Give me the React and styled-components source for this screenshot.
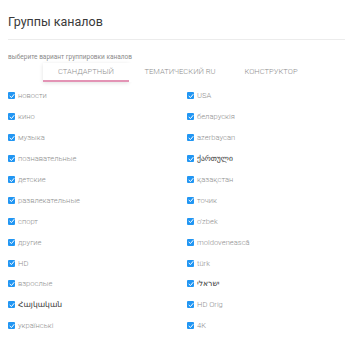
import React, { useState } from "react";
import styled, { createGlobalStyle } from "styled-components";

const GlobalStyle = createGlobalStyle`
  body {
    margin: 0;
    background: #ffffff;
    font-family: Roboto, "Noto Sans", "DejaVu Sans", sans-serif;
  }
`;

const Page = styled.div`
  width: 350px;
  height: 350px;
  overflow: hidden;
  padding: 13px 5px 0 8px;
  box-sizing: border-box;
`;

const Title = styled.h2`
  margin: 0;
  font-size: 12.5px;
  font-weight: 400;
  color: #3a3a3a;
  line-height: 18px;
`;

const Divider = styled.hr`
  border: 0;
  height: 1px;
  background: #ececec;
  margin: 8px 0 12px;
`;

const Hint = styled.div`
  font-size: 6.5px;
  color: #8a8a8a;
  line-height: 10px;
`;

const Tabs = styled.div`
  display: flex;
  padding-left: 35px;
  margin-top: 1px;
`;

const Tab = styled.button`
  border: 0;
  background: #fff;
  font-family: inherit;
  font-size: 7.6px;
  font-weight: 300;
  color: #8f8f8f;
  height: 19px;
  padding: 0;
  width: ${(p) => p.$w}px;
  text-align: center;
  box-shadow: ${(p) =>
    p.$active ? "0 1px 4px rgba(0,0,0,0.12)" : "none"};
  border-bottom: 2px solid ${(p) => (p.$active ? "#e394b5" : "transparent")};
  cursor: pointer;
`;

const Grid = styled.div`
  display: grid;
  grid-template-columns: 179px 1fr;
  grid-auto-rows: 20.9px;
  margin-top: 3.5px;
`;

const Item = styled.label`
  display: flex;
  align-items: center;
  gap: 3px;
  font-size: 7.6px;
  cursor: pointer;
`;

const Box = styled.span`
  width: 7px;
  height: 7px;
  background: #2196f3;
  border-radius: 1px;
  display: flex;
  align-items: center;
  justify-content: center;
  flex: none;
`;

const Text = styled.span`
  color: ${(p) => (p.$dark ? "#333" : "#8f8f8f")};
  font-weight: ${(p) => (p.$dark ? 400 : 300)};
`;

const left = [
  "новости",
  "кино",
  "музыка",
  "познавательные",
  "детские",
  "развлекательные",
  "спорт",
  "другие",
  "HD",
  "взрослые",
  "Հայկական",
  "українські",
];

const right = [
  "USA",
  "беларускія",
  "azerbaycan",
  "ქართული",
  "қазақстан",
  "точик",
  "o'zbek",
  "moldovenească",
  "türk",
  "ישראלי",
  "HD Orig",
  "4K",
];

const dark = ["Հայկական", "ქართული", "ישראלי"];

const Check = () => (
  <svg width="6" height="6" viewBox="0 0 12 12">
    <path
      d="M2 6.5 L5 9 L10 3"
      stroke="#fff"
      strokeWidth="2"
      fill="none"
      strokeLinecap="round"
      strokeLinejoin="round"
    />
  </svg>
);

const tabs = [
  { label: "СТАНДАРТНЫЙ", w: 86 },
  { label: "ТЕМАТИЧЕСКИЙ RU", w: 102 },
  { label: "КОНСТРУКТОР", w: 80 },
];

const App = () => {
  const [active, setActive] = useState(0);
  const rows = [];
  left.forEach((l, i) => {
    rows.push(l, right[i]);
  });

  return (
    <Page>
      <GlobalStyle />
      <Title>Группы каналов</Title>
      <Divider />
      <Hint>выберите вариант группировки каналов</Hint>
      <Tabs>
        {tabs.map((t, i) => (
          <Tab
            key={t.label}
            $w={t.w}
            $active={active === i}
            onClick={() => setActive(i)}
          >
            {t.label}
          </Tab>
        ))}
      </Tabs>
      <Grid>
        {rows.map((name) => (
          <Item key={name}>
            <Box>
              <Check />
            </Box>
            <Text $dark={dark.includes(name)}>{name}</Text>
          </Item>
        ))}
      </Grid>
    </Page>
  );
};

export default App;
